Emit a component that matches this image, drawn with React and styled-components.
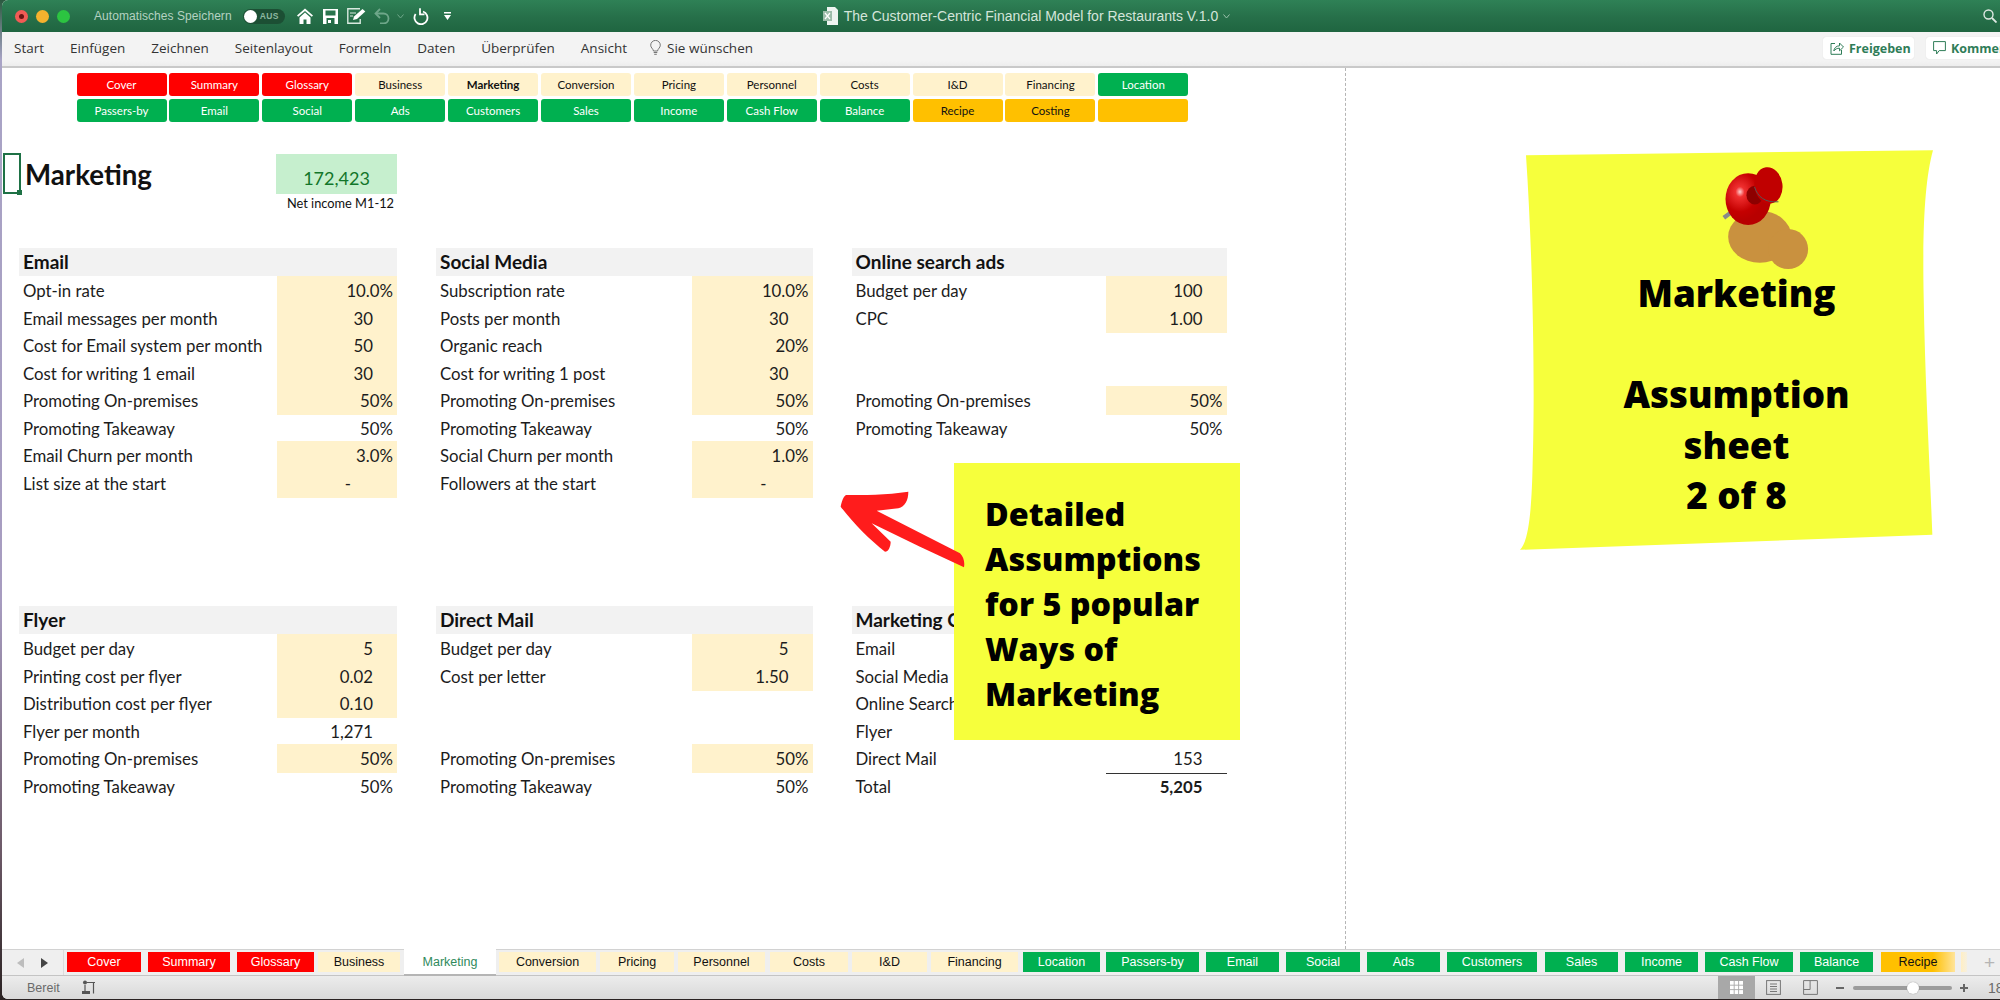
import React from 'react'
import styled, { createGlobalStyle } from 'styled-components'

const Global = createGlobalStyle`
  html, body { margin: 0; padding: 0; background: #3a3030; }
  body { font-family: "Lato", "Liberation Sans", sans-serif; }
`

const Screen = styled.div`
  width: 2000px;
  height: 1000px;
  overflow: hidden;
  background: linear-gradient(180deg, #2b5a40 0, #a9a4c6 6%, #a79cc0 60%, #6d5a68 85%, #2a2222 100%);
`
const Win = styled.div`
  margin-left: 2px;
  width: 1998px;
  height: 999px;
  display: flex;
  flex-direction: column;
  overflow: hidden;
  background: #fff;
  border-radius: 6px 0 0 6px;
`

const TitleBar = styled.div`
  height: 32px;
  flex: none;
  display: flex;
  align-items: center;
  background: linear-gradient(180deg, #2f8156 0%, #266f49 55%, #1f6540 100%);
`
const Lights = styled.div`
  display: flex;
  gap: 8px;
  margin-left: 13px;
`
const Light = styled.span`
  width: 13px;
  height: 13px;
  border-radius: 50%;
  background: ${p => p.$c};
  display: flex;
  align-items: center;
  justify-content: center;
`
const Dot = styled.i`
  width: 5px;
  height: 5px;
  border-radius: 50%;
  background: #6a1414;
`
const AutoSave = styled.span`
  margin-left: 24px;
  font: 12px "Liberation Sans", sans-serif;
  letter-spacing: 0.07px;
  color: #b4d2c1;
  white-space: nowrap;
`
const Toggle = styled.span`
  margin-left: 11px;
  width: 42px;
  height: 15px;
  flex: none;
  border-radius: 8px;
  background: #1c4f34;
  display: flex;
  align-items: center;
  gap: 3px;
  padding-left: 1px;
  box-sizing: border-box;
`
const Knob = styled.i`
  width: 13px;
  height: 13px;
  border-radius: 50%;
  background: #fff;
`
const ToggleText = styled.span`
  font: bold 8.5px "Liberation Sans", sans-serif;
  letter-spacing: 0.4px;
  color: #8db8a0;
`
const QuickIcon = styled.svg`
  flex: none;
  display: block;
  margin-left: ${p => p.$ml}px;
`
const DocTitle = styled.span`
  margin-left: 6px;
  font: 14px "Liberation Sans", sans-serif;
  color: #d4e5da;
  white-space: nowrap;
`
const SearchWrap = styled.div`
  margin-left: auto;
  margin-right: 3px;
  display: flex;
`

const Ribbon = styled.div`
  height: 36px;
  box-sizing: border-box;
  padding-bottom: 2px;
  flex: none;
  display: flex;
  align-items: center;
  background: linear-gradient(180deg, #f3f3f3 85%, #ededed 100%);
  border-bottom: 2px solid #c9c9c9;
  position: relative;
  z-index: 2;
`
const MenuList = styled.nav`
  display: flex;
  gap: 26px;
  margin-left: 12px;
  align-items: center;
`
const MenuItem = styled.span`
  font: 500 13.5px "Open Sans", sans-serif;
  color: #333;
  white-space: nowrap;
`
const Wish = styled.div`
  display: flex;
  align-items: center;
  gap: 6px;
  margin-left: -3px;
`
const Actions = styled.div`
  margin-left: auto;
  margin-right: -42px;
  display: flex;
  gap: 12px;
`
const ActionBtn = styled.div`
  width: ${p => p.$w}px;
  height: 22px;
  box-sizing: border-box;
  padding-left: 7px;
  background: #fff;
  border-radius: 3px;
  box-shadow: 0 0 1px #cfcfcf;
  display: flex;
  align-items: center;
  gap: 5px;
  font: bold 12.5px "Open Sans", sans-serif;
  color: #2f7d58;
  white-space: nowrap;
`

const Sheet = styled.div`
  flex: 1;
  position: relative;
  background: #fff;
  min-height: 0;
`
const PageBreak = styled.div`
  position: absolute;
  left: 1343px;
  top: 0;
  bottom: 0;
  border-left: 1px dashed #b5b5b5;
`
const NavGrid = styled.div`
  display: grid;
  grid-template-columns: repeat(12, 90px);
  gap: 3px 2.9px;
  margin-left: 74.5px;
  padding-top: 5px;
`
const NavBtn = styled.div`
  height: 23px;
  border-radius: 3px;
  background: ${p => fills[p.$kind]};
  color: ${p => (p.$kind === 'red' || p.$kind === 'green' ? '#fff' : '#111')};
  font-size: 11.5px;
  font-weight: ${p => (p.$on ? 700 : 400)};
  display: flex;
  align-items: center;
  justify-content: center;
`
const fills = { red: '#ff0000', cream: '#fff2cc', green: '#00b050', orange: '#ffc000' }

const Head = styled.div`
  width: 395px;
  margin-top: 31px;
  padding-left: 1px;
  box-sizing: border-box;
  display: flex;
  align-items: flex-start;
`
const CellCursor = styled.div`
  width: 18px;
  height: 41px;
  box-sizing: border-box;
  border: 2px solid #1e7145;
  position: relative;
  flex: none;
  &::after {
    content: '';
    position: absolute;
    right: -3px;
    bottom: -3px;
    width: 5px;
    height: 5px;
    background: #1e7145;
  }
`
const SheetTitle = styled.h1`
  margin: 5px 0 0 4px;
  font-size: 27.7px;
  line-height: 34px;
  font-weight: 700;
  color: #111;
`
const Kpi = styled.div`
  margin-left: auto;
  width: 121px;
`
const KpiValue = styled.div`
  height: 40px;
  margin-top: 1px;
  padding-top: 9px;
  box-sizing: border-box;
  background: #c6efce;
  color: #12762a;
  font-size: 18px;
  line-height: 30px;
  text-align: center;
`
const KpiLabel = styled.div`
  font-size: 12.8px;
  line-height: 18px;
  padding-right: 3px;
  text-align: right;
  color: #111;
  white-space: nowrap;
`

const Blocks = styled.div`
  display: grid;
  grid-template-columns: 378px 376.5px 375px;
  column-gap: 39px;
  row-gap: 110px;
  margin: 36px 0 0 17px;
`
const Block = styled.section`
  display: flex;
  flex-direction: column;
`
const BlockHead = styled.h2`
  margin: 0;
  height: 28px;
  padding-left: 4px;
  background: #f2f2f2;
  font-size: 19px;
  line-height: 28px;
  font-weight: 700;
  color: #111;
  white-space: nowrap;
`
const Row = styled.div`
  height: 27.5px;
  display: grid;
  grid-template-columns: 1fr 120.5px;
  font-size: 16.8px;
  line-height: 29px;
  color: #1c1c1c;
`
const Label = styled.span`
  padding-left: 4px;
  white-space: nowrap;
`
const Value = styled.span`
  box-sizing: border-box;
  text-align: right;
  padding-right: ${p => p.$pad}px;
  background: ${p => (p.$fill ? '#fff2cc' : 'transparent')};
  font-weight: ${p => (p.$bold ? 700 : 400)};
  border-bottom: ${p => (p.$rule ? '1px solid #333' : '0')};
`

const Callout = styled.div`
  position: absolute;
  left: 952px;
  top: 395px;
  width: 286px;
  height: 277px;
  box-sizing: border-box;
  padding: 28px 0 0 31px;
  background: #f6ff3c;
  font: 800 32.3px/45px "Open Sans", sans-serif;
  color: #000;
`
const Arrow = styled.svg`
  position: absolute;
  left: 836px;
  top: 420px;
`
const Note = styled.div`
  position: absolute;
  left: 1518px;
  top: 82px;
  width: 413px;
  height: 400px;
  box-sizing: border-box;
  padding: 118px 0 0 20px;
  text-align: center;
  font: 800 36.7px/50.5px "Open Sans", sans-serif;
  color: #000;
`
const NoteShape = styled.svg`
  position: absolute;
  left: 0;
  top: 0;
`
const NoteLine = styled.div`
  position: relative;
  min-height: 50.5px;
`

const TabBar = styled.div`
  height: 25px;
  flex: none;
  display: flex;
  align-items: stretch;
  background: #efefef;
  border-top: 1px solid #d2d2d2;
  border-bottom: 1px solid #c4c4c4;
  position: relative;
`
const TabNav = styled.div`
  width: 62px;
  flex: none;
  box-sizing: border-box;
  display: flex;
  align-items: center;
  gap: 17px;
  padding-left: 15px;
  border-right: 1px solid #dcdcdc;
`
const Tri = styled.i`
  width: 0;
  height: 0;
  border-top: 5.5px solid transparent;
  border-bottom: 5.5px solid transparent;
  border-${p => (p.$dir === 'l' ? 'right' : 'left')}: 7px solid ${p => (p.$off ? '#bdbdbd' : '#444')};
`
const TabList = styled.div`
  display: flex;
  margin-left: 3px;
`
const Tab = styled.div`
  width: ${p => p.$w}px;
  margin: ${p => (p.$active ? '-1px' : '2px')} ${p => p.$gap}px ${p => (p.$active ? '-1px' : '3px')} 0;
  flex: none;
  box-sizing: border-box;
  background: ${p => (p.$active ? '#fff' : p.$kind === 'fade' ? 'linear-gradient(90deg,#ffc000 70%,#ffe49a 100%)' : fills[p.$kind])};
  color: ${p => (p.$active ? '#2f8a5c' : p.$kind === 'red' || p.$kind === 'green' ? '#fff' : '#111')};
  border-bottom: ${p => (p.$active ? '2px solid #b5b5b5' : '0')};
  font: 12.5px "Liberation Sans", sans-serif;
  display: flex;
  align-items: center;
  justify-content: center;
  white-space: nowrap;
`
const PartialTab = styled.div`
  width: 6px;
  margin: 2px 0 3px;
  background: linear-gradient(90deg, #ffeec4, #f6f0df);
`
const AddTab = styled.span`
  position: absolute;
  right: 0;
  top: 0;
  width: 16px;
  height: 25px;
  font: 19px/25px "Liberation Sans", sans-serif;
  color: #b5b5b5;
`

const StatusBar = styled.div`
  height: 23px;
  flex: none;
  display: flex;
  align-items: center;
  background: linear-gradient(180deg, #ececec, #d9d9d9);
  font: 12.5px "Liberation Sans", sans-serif;
  color: #6a6a6a;
`
const Ready = styled.span`
  margin-left: 25px;
`
const ViewGroup = styled.div`
  margin-left: auto;
  display: flex;
  align-items: center;
  height: 100%;
`
const ViewBtn = styled.div`
  width: 37px;
  height: 100%;
  display: flex;
  align-items: center;
  justify-content: center;
  background: ${p => (p.$on ? '#a8a8a8' : 'transparent')};
`
const ZoomSign = styled.i`
  width: 8px;
  height: 2px;
  background: #666;
  position: relative;
  flex: none;
  margin-left: ${p => p.$ml || 0}px;
  ${p => p.$plus && `
    &::after {
      content: '';
      position: absolute;
      left: 3px;
      top: -3px;
      width: 2px;
      height: 8px;
      background: #666;
    }
  `}
`
const Slider = styled.div`
  width: 99px;
  height: 4px;
  margin: 0 8px 0 9px;
  border-radius: 2px;
  background: #9b9b9b;
  position: relative;
`
const SliderKnob = styled.i`
  position: absolute;
  left: 54px;
  top: -4px;
  width: 12px;
  height: 12px;
  border-radius: 50%;
  background: #fff;
  box-shadow: 0 0 1px #777;
`
const ZoomValue = styled.span`
  margin: 0 -24px 0 20px;
  font-size: 14px;
  width: 36px;
  white-space: nowrap;
`

const nav = [
  [['Cover', 'red'], ['Summary', 'red'], ['Glossary', 'red'], ['Business', 'cream'], ['Marketing', 'cream', true], ['Conversion', 'cream'], ['Pricing', 'cream'], ['Personnel', 'cream'], ['Costs', 'cream'], ['I&D', 'cream'], ['Financing', 'cream'], ['Location', 'green']],
  [['Passers-by', 'green'], ['Email', 'green'], ['Social', 'green'], ['Ads', 'green'], ['Customers', 'green'], ['Sales', 'green'], ['Income', 'green'], ['Cash Flow', 'green'], ['Balance', 'green'], ['Recipe', 'orange'], ['Costing', 'orange'], ['', 'orange']],
]

const tabs = [
  ['Cover', 'red', 74, 7], ['Summary', 'red', 82, 7], ['Glossary', 'red', 77, 4], ['Business', 'cream', 82, 4],
  ['Marketing', 'cream', 92, 3, true], ['Conversion', 'cream', 97, 4], ['Pricing', 'cream', 74, 4], ['Personnel', 'cream', 87, 5],
  ['Costs', 'cream', 78, 4], ['I&D', 'cream', 75, 4], ['Financing', 'cream', 87, 5], ['Location', 'green', 77, 6],
  ['Passers-by', 'green', 93, 7], ['Email', 'green', 73, 7], ['Social', 'green', 74, 7], ['Ads', 'green', 73, 7],
  ['Customers', 'green', 90, 8], ['Sales', 'green', 73, 7], ['Income', 'green', 73, 7], ['Cash Flow', 'green', 88, 7],
  ['Balance', 'green', 73, 8], ['Recipe', 'fade', 74, 6],
]

const blocks = [
  { title: 'Email', rows: [
    ['Opt-in rate', '10.0%', 1], ['Email messages per month', '30', 1], ['Cost for Email system per month', '50', 1], ['Cost for writing 1 email', '30', 1],
    ['Promoting On-premises', '50%', 1], ['Promoting Takeaway', '50%'], ['Email Churn per month', '3.0%', 1], ['List size at the start', '-', 1],
  ] },
  { title: 'Social Media', rows: [
    ['Subscription rate', '10.0%', 1], ['Posts per month', '30', 1], ['Organic reach', '20%', 1], ['Cost for writing 1 post', '30', 1],
    ['Promoting On-premises', '50%', 1], ['Promoting Takeaway', '50%'], ['Social Churn per month', '1.0%', 1], ['Followers at the start', '-', 1],
  ] },
  { title: 'Online search ads', rows: [
    ['Budget per day', '100', 1], ['CPC', '1.00', 1], ['', ''], ['', ''], ['Promoting On-premises', '50%', 1], ['Promoting Takeaway', '50%'],
  ] },
  { title: 'Flyer', rows: [
    ['Budget per day', '5', 1], ['Printing cost per flyer', '0.02', 1], ['Distribution cost per flyer', '0.10', 1], ['Flyer per month', '1,271'],
    ['Promoting On-premises', '50%', 1], ['Promoting Takeaway', '50%'],
  ] },
  { title: 'Direct Mail', rows: [
    ['Budget per day', '5', 1], ['Cost per letter', '1.50', 1], ['', ''], ['', ''], ['Promoting On-premises', '50%', 1], ['Promoting Takeaway', '50%'],
  ] },
  { title: 'Marketing Costs', rows: [
    ['Email', ''], ['Social Media', ''], ['Online Search', ''], ['Flyer', ''], ['Direct Mail', '153', 0, 'rule'], ['Total', '5,205', 0, 'bold'],
  ] },
]

const padFor = v => (v.endsWith('%') ? 4 : v === '-' ? 46 : 24)

const HomeIcon = () => (
  <QuickIcon $ml={12} width="16" height="16" viewBox="0 0 16 16">
    <path d="M8 .5 0 7.5l1.2 1.3L8 3l6.8 5.8L16 7.5z" fill="#fff" />
    <path d="M8 4.6 2.5 9.4V16h4v-4.4h3V16h4V9.4z" fill="#fff" />
  </QuickIcon>
)
const SaveIcon = () => (
  <QuickIcon $ml={10} width="15" height="15" viewBox="0 0 15 15">
    <path d="M0 0h15v15H0zM2.5 1.5v5h10v-5zM3.5 9v6h8V9z" fill="#fff" fillRule="evenodd" />
    <rect x="5" y="11" width="3" height="3" fill="#fff" />
  </QuickIcon>
)
const EditIcon = () => (
  <QuickIcon $ml={9} width="19" height="16" viewBox="0 0 19 16">
    <path d="M13 .8H.8v14.4h12.4V11" fill="none" stroke="#d9e9df" strokeWidth="1.4" />
    <path d="M6 12l1-3.5L15.5 1l2.8 2.6L10 11z" fill="#fff" />
    <path d="M3 5h6M3 8h3" stroke="#d9e9df" strokeWidth="1" />
  </QuickIcon>
)
const UndoIcon = () => (
  <QuickIcon $ml={8} width="16" height="16" viewBox="0 0 16 16">
    <path d="M6 1 1.5 5.5 6 10" fill="none" stroke="#6fa78a" strokeWidth="1.8" />
    <path d="M2 5.5h7.5a5 5 0 0 1 0 10H6" fill="none" stroke="#6fa78a" strokeWidth="1.8" />
  </QuickIcon>
)
const Chevron = ({ ml = 7, color = '#6fa78a' }) => (
  <QuickIcon $ml={ml} width="7" height="5" viewBox="0 0 7 5">
    <path d="M.5.5 3.5 4 6.5.5" fill="none" stroke={color} strokeWidth="1" />
  </QuickIcon>
)
const RedoIcon = () => (
  <QuickIcon $ml={9} width="16" height="17" viewBox="0 0 16 17">
    <path d="M2.6 6A6.5 6.5 0 1 0 10 3.5" fill="none" stroke="#fff" strokeWidth="1.8" />
    <path d="M7 .2V6.4h4.5" fill="none" stroke="#fff" strokeWidth="1.8" />
  </QuickIcon>
)
const CustomizeIcon = () => (
  <QuickIcon $ml={15} width="7" height="8" viewBox="0 0 7 8">
    <path d="M0 0h7v1.4H0zM0 3h7L3.5 8z" fill="#fff" />
  </QuickIcon>
)
const ExcelDoc = () => (
  <QuickIcon $ml={372} width="15" height="18" viewBox="0 0 15 18">
    <path d="M4 0h8l3 3v15H4z" fill="#eef4f0" />
    <rect x="0" y="4" width="9" height="10" fill="#9dbdaa" />
    <path d="M2 6l5 6M7 6l-5 6" stroke="#fff" strokeWidth="1.2" />
  </QuickIcon>
)
const SearchIcon = () => (
  <svg width="14" height="14" viewBox="0 0 14 14">
    <circle cx="5.5" cy="5.5" r="4.5" fill="none" stroke="#dfe9e3" strokeWidth="1.4" />
    <path d="M9 9l4.5 4.5" stroke="#dfe9e3" strokeWidth="1.8" />
  </svg>
)
const BulbIcon = () => (
  <svg width="11" height="16" viewBox="0 0 11 16">
    <path d="M3.5 11C3 8.5.7 7.8.7 5.2a4.8 4.8 0 0 1 9.6 0c0 2.6-2.3 3.3-2.8 5.8z" fill="none" stroke="#666" strokeWidth="0.9" />
    <path d="M3.7 12.5h3.6M4.2 14.3h2.6" stroke="#666" strokeWidth="0.9" />
  </svg>
)
const ShareIcon = () => (
  <svg width="14" height="14" viewBox="0 0 14 14">
    <path d="M5 2.5H1v10.8h10.5V9" fill="none" stroke="#2f7d58" strokeWidth="1" />
    <path d="M3.8 10c.3-3 2.5-5.2 5.7-5.2V2L13.5 6 9.5 9.8V7.2C7.2 7.2 5.3 8 3.8 10z" fill="none" stroke="#2f7d58" strokeWidth="1" />
  </svg>
)
const CommentIcon = () => (
  <svg width="13" height="14" viewBox="0 0 13 14">
    <path d="M.6.6h11.8v9H6.2L3.6 13V9.6h-3z" fill="none" stroke="#2f7d58" strokeWidth="1" />
  </svg>
)
const MacroIcon = () => (
  <QuickIcon $ml={21} width="15" height="15" viewBox="0 0 15 15">
    <circle cx="4" cy="2.5" r="2" fill="#555" />
    <path d="M6 2.5h8M12.5 2.5v11M4 5v6" stroke="#555" strokeWidth="1.2" fill="none" />
    <rect x="1" y="11" width="8" height="3" fill="#555" />
  </QuickIcon>
)
const GridIcon = () => (
  <svg width="13" height="13" viewBox="0 0 13 13">
    <path d="M0 0h13v13H0z" fill="#fff" />
    <path d="M4.2 0v13M8.6 0v13M0 4.2h13M0 8.6h13" stroke="#a8a8a8" strokeWidth="0.9" />
  </svg>
)
const PageIcon = () => (
  <svg width="15" height="15" viewBox="0 0 15 15">
    <rect x=".6" y=".6" width="13.8" height="13.8" fill="none" stroke="#777" strokeWidth="1" />
    <path d="M4 4h7M4 6.5h7M4 9h7M4 11.5h7" stroke="#777" strokeWidth="1.1" />
  </svg>
)
const BreakIcon = () => (
  <svg width="15" height="15" viewBox="0 0 15 15">
    <path d="M.6.6h13.8v13.8H.6zM.6 9.5h6.5V.6" fill="none" stroke="#777" strokeWidth="1" />
  </svg>
)

const ArrowShape = () => (
  <Arrow width="132" height="84" viewBox="54 144 396 252">
    <path
      d="M62 200C65 185 70 170 78 165C130 165 200 165 265 155C265 180 255 200 235 205L170 212L420 340C430 350 435 365 432 382L300 320L155 250L212 305C212 320 205 335 195 335C150 300 100 250 62 200Z"
      fill="#ff1c1c"
    />
  </Arrow>
)

const NoteArt = () => (
  <NoteShape width="413" height="400" viewBox="60 60 1240 1200">
    <defs>
      <radialGradient id="ball" cx="0.32" cy="0.36" r="0.55">
        <stop offset="0" stopColor="#ffd0d0" />
        <stop offset="0.18" stopColor="#f03030" />
        <stop offset="0.7" stopColor="#c40000" />
        <stop offset="1" stopColor="#b80000" />
      </radialGradient>
    </defs>
    <path
      d="M78 75L1300 60C1275 150 1268 300 1272 500C1276 750 1290 1000 1298 1215L60 1260C85 1235 95 1150 98 1000C105 800 100 400 78 75Z"
      fill="#f6ff3c"
    />
    <ellipse cx="780" cy="320" rx="95" ry="78" fill="#c9913f" />
    <ellipse cx="865" cy="357" rx="60" ry="60" fill="#c9913f" />
    <path d="M668 258l22-16 8 10-22 16z" fill="#8a8a8a" />
    <ellipse cx="745" cy="207" rx="68" ry="78" fill="url(#ball)" />
    <ellipse cx="765" cy="195" rx="25" ry="28" fill="#8d0000" />
    <ellipse cx="806" cy="166" rx="42" ry="55" fill="#c00000" transform="rotate(-8 806 166)" />
    <path d="M764 170c10 30 30 48 72 45" fill="none" stroke="#555" strokeWidth="3" />
  </NoteShape>
)

export default function App() {
  return (
    <Screen>
      <Global />
      <Win>
        <TitleBar>
          <Lights>
            <Light $c="#f15b55"><Dot /></Light>
            <Light $c="#f4b22e" />
            <Light $c="#2cc441" />
          </Lights>
          <AutoSave>Automatisches Speichern</AutoSave>
          <Toggle><Knob /><ToggleText>AUS</ToggleText></Toggle>
          <HomeIcon />
          <SaveIcon />
          <EditIcon />
          <UndoIcon />
          <Chevron />
          <RedoIcon />
          <CustomizeIcon />
          <ExcelDoc />
          <DocTitle>The Customer-Centric Financial Model for Restaurants V.1.0</DocTitle>
          <Chevron ml={5} color="#9cc2ad" />
          <SearchWrap><SearchIcon /></SearchWrap>
        </TitleBar>

        <Ribbon>
          <MenuList>
            {['Start', 'Einfügen', 'Zeichnen', 'Seitenlayout', 'Formeln', 'Daten', 'Überprüfen', 'Ansicht'].map(m => (
              <MenuItem key={m}>{m}</MenuItem>
            ))}
            <Wish><BulbIcon /><MenuItem>Sie wünschen</MenuItem></Wish>
          </MenuList>
          <Actions>
            <ActionBtn $w={91}><ShareIcon />Freigeben</ActionBtn>
            <ActionBtn $w={116}><CommentIcon />Kommentare</ActionBtn>
          </Actions>
        </Ribbon>

        <Sheet>
          <PageBreak />
          <NavGrid>
            {nav.flat().map(([label, kind, on], i) => (
              <NavBtn key={i} $kind={kind} $on={on}>{label}</NavBtn>
            ))}
          </NavGrid>

          <Head>
            <CellCursor />
            <SheetTitle>Marketing</SheetTitle>
            <Kpi>
              <KpiValue>172,423</KpiValue>
              <KpiLabel>Net income M1-12</KpiLabel>
            </Kpi>
          </Head>

          <Blocks>
            {blocks.map(b => (
              <Block key={b.title}>
                <BlockHead>{b.title}</BlockHead>
                {b.rows.map(([label, value, fill, mark], i) => (
                  <Row key={i}>
                    <Label>{label}</Label>
                    <Value $fill={!!fill} $pad={padFor(value)} $bold={mark === 'bold'} $rule={mark === 'rule'}>{value}</Value>
                  </Row>
                ))}
              </Block>
            ))}
          </Blocks>

          <Callout>Detailed<br />Assumptions<br />for 5 popular<br />Ways of<br />Marketing</Callout>
          <ArrowShape />

          <Note>
            <NoteArt />
            <NoteLine>Marketing</NoteLine>
            <NoteLine />
            <NoteLine>Assumption</NoteLine>
            <NoteLine>sheet</NoteLine>
            <NoteLine>2 of 8</NoteLine>
          </Note>
        </Sheet>

        <TabBar>
          <TabNav><Tri $dir="l" $off /><Tri $dir="r" /></TabNav>
          <TabList>
            {tabs.map(([label, kind, w, gap, active]) => (
              <Tab key={label} $kind={kind} $w={w} $gap={gap} $active={active}>{label}</Tab>
            ))}
            <PartialTab />
          </TabList>
          <AddTab>+</AddTab>
        </TabBar>

        <StatusBar>
          <Ready>Bereit</Ready>
          <MacroIcon />
          <ViewGroup>
            <ViewBtn $on><GridIcon /></ViewBtn>
            <ViewBtn><PageIcon /></ViewBtn>
            <ViewBtn><BreakIcon /></ViewBtn>
            <ZoomSign $ml={7} />
            <Slider><SliderKnob /></Slider>
            <ZoomSign $plus />
            <ZoomValue>180%</ZoomValue>
          </ViewGroup>
        </StatusBar>
      </Win>
    </Screen>
  )
}
